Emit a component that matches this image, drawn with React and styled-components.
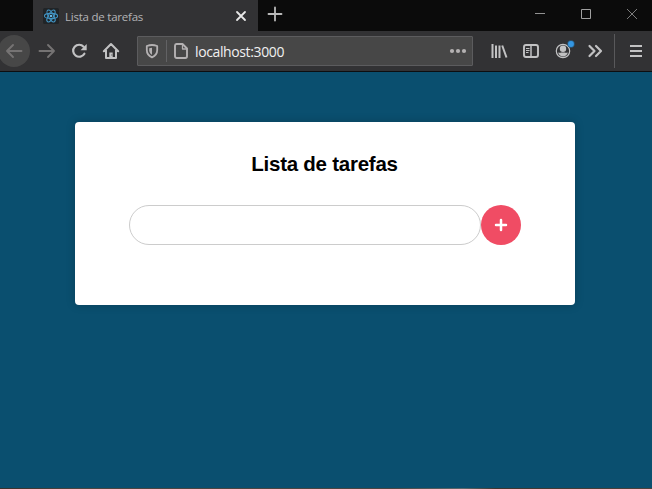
import React from "react";
import styled, { createGlobalStyle } from "styled-components";

const GlobalStyle = createGlobalStyle`
  * { box-sizing: border-box; }
  body { margin: 0; background: #0a4f6f; overflow: hidden; }
`;

const Window = styled.div`
  display: flex;
  flex-direction: column;
  width: 652px;
  height: 489px;
  overflow: hidden;
  background: #0a4f6f;
`;

const TitleBar = styled.header`
  display: flex;
  flex: none;
  height: 31px;
  padding-left: 33px;
  background: #0b0b0b;
`;

const Tab = styled.div`
  display: flex;
  align-items: center;
  width: 225px;
  padding: 0 9px 0 10px;
  background: #323234;
`;

const Favicon = styled.svg`
  width: 16px;
  height: 16px;
  margin-right: 6px;
`;

const TabTitle = styled.span`
  flex: 1;
  font: 11.5px/16px "Open Sans", "Noto Sans", sans-serif;
  letter-spacing: -0.23px;
  color: #b4b4b6;
  padding-top: 2px;
  white-space: nowrap;
`;

const TitleIcon = styled.svg`
  display: block;
  flex: none;
  width: 16px;
  height: 16px;
`;

const NewTab = styled.div`
  padding: 6px 0 0 9px;
`;

const WindowControls = styled.div`
  display: flex;
  gap: 30px;
  margin-left: auto;
  padding: 6px 12px 0 0;
`;

const Toolbar = styled.nav`
  display: flex;
  flex: none;
  align-items: center;
  height: 41px;
  padding-bottom: 1px;
  background: #323234;
  border-bottom: 1px solid #0d0e10;
`;

const ToolButton = styled.div`
  display: flex;
  flex: none;
  align-items: center;
  justify-content: center;
  width: 32px;
  height: 32px;
  border-radius: 50%;
  background: ${(p) => (p.$round ? "#474747" : "transparent")};
  color: ${(p) => (p.$dim ? "#757373" : "#c2c2c3")};
  margin-left: ${(p) => p.$before || 0}px;
`;

const ToolIcon = styled.svg`
  display: block;
  width: 20px;
  height: 20px;
  overflow: visible;
`;

const AddressBar = styled.div`
  display: flex;
  flex: none;
  align-items: center;
  width: 336px;
  height: 30px;
  margin: 1px 10px 0;
  padding: 0 4px;
  border: 1px solid #5c5c5e;
  border-radius: 1px;
  background: #474747;
  color: #b4b1b2;
`;

const AddressDivider = styled.span`
  width: 1px;
  height: 22px;
  margin: 0 4px;
  background: #626264;
`;

const Address = styled.span`
  flex: 1;
  margin-left: 4px;
  padding-top: 2px;
  font: 14px/20px "Open Sans", "Noto Sans", sans-serif;
  letter-spacing: -0.38px;
  color: #f0f0f0;
`;

const ToolbarDivider = styled.span`
  width: 1px;
  height: 34px;
  margin: 0 5px 0 3px;
  background: #59595b;
`;

const Page = styled.main`
  flex: 1;
  padding-top: 50px;
  background: #0a4f6f;
`;

const Card = styled.section`
  width: 500px;
  height: 183px;
  margin-left: 75px;
  padding: 30px 54px 0;
  border-radius: 4px;
  background: #fff;
  box-shadow: 0 0 10px rgba(0, 0, 0, 0.2);
`;

const Heading = styled.h1`
  margin: 0 1px 30px 0;
  font: bold 20.5px/23px "Liberation Sans", Arial, sans-serif;
  letter-spacing: -0.25px;
  color: #000;
  text-align: center;
`;

const TaskForm = styled.div`
  display: flex;
`;

const TaskInput = styled.input`
  width: 352px;
  height: 40px;
  padding: 0 20px;
  border: 1px solid #ccc;
  border-radius: 20px;
  outline: none;
  background: #fff;
`;

const AddButton = styled.button`
  display: flex;
  align-items: center;
  justify-content: center;
  width: 40px;
  height: 40px;
  padding: 0;
  border: 0;
  border-radius: 50%;
  background: #f04c64;
`;

const WindowEdge = styled.footer`
  flex: none;
  height: 1px;
  background: linear-gradient(90deg, #3a2f2a, #4d4541 12%, #4a4442 60%, #5b676c 71%, #40352f 76%, #4c423d);
`;

const stroke = (width = 2) => ({
  fill: "none",
  stroke: "currentColor",
  strokeWidth: width,
  strokeLinecap: "round",
  strokeLinejoin: "round",
});

function ReactLogo() {
  return (
    <Favicon viewBox="0 0 16 16">
      <rect width="16" height="16" rx="1.5" fill="#202427" />
      <g fill="none" stroke="#4295c5" strokeWidth="1.1">
        <ellipse cx="8" cy="8" rx="6.6" ry="2.6" />
        <ellipse cx="8" cy="8" rx="6.6" ry="2.6" transform="rotate(60 8 8)" />
        <ellipse cx="8" cy="8" rx="6.6" ry="2.6" transform="rotate(120 8 8)" />
      </g>
      <circle cx="8" cy="8" r="1.3" fill="#65b9e5" />
    </Favicon>
  );
}

function Tool({ children, ...rest }) {
  return (
    <ToolButton {...rest}>
      <ToolIcon viewBox="0 0 20 20">{children}</ToolIcon>
    </ToolButton>
  );
}

export default function App() {
  return (
    <>
      <GlobalStyle />
      <Window>
        <TitleBar>
          <Tab>
            <ReactLogo />
            <TabTitle>Lista de tarefas</TabTitle>
            <TitleIcon viewBox="0 0 16 16">
              <path d="M4 4l8 8M12 4l-8 8" stroke="#e8e8e8" strokeWidth="1.8" strokeLinecap="round" />
            </TitleIcon>
          </Tab>
          <NewTab>
            <TitleIcon viewBox="0 0 16 16">
              <path d="M1.5 8h13M8 1.5v13" stroke="#bababa" strokeWidth="1.8" strokeLinecap="round" />
            </TitleIcon>
          </NewTab>
          <WindowControls>
            <TitleIcon viewBox="0 0 16 16">
              <path d="M3 7.5h10" stroke="#929292" />
            </TitleIcon>
            <TitleIcon viewBox="0 0 16 16">
              <path d="M3.5 3.5h9v9h-9z" fill="none" stroke="#a0a0a0" />
            </TitleIcon>
            <TitleIcon viewBox="0 0 16 16">
              <path d="M3 3l10 10M13 3L3 13" stroke="#888" strokeWidth="0.9" />
            </TitleIcon>
          </WindowControls>
        </TitleBar>

        <Toolbar>
          <Tool $round $dim $before={-2}>
            <path d="M17.5 10H3M9 4L3 10l6 6" {...stroke(1.9)} />
          </Tool>
          <Tool $dim $before={1}>
            <path d="M2.5 10H17M11 4l6 6-6 6" {...stroke(1.9)} />
          </Tool>
          <Tool>
            <path d="M15.4 12.7a6 6 0 1 1-.8-7" {...stroke(2.2)} />
            <path d="M17.7 3v6.2h-6.2z" fill="currentColor" />
          </Tool>
          <Tool>
            <path d="M2.8 10.2L10 3l7.2 7.2M5 9v8h10V9" {...stroke(2)} />
            <path d="M8.3 16.5v-5h3.4v5z" fill="currentColor" />
            <path d="M10.3 13.500h1v1h-1z" fill="#4a4a4c" />
          </Tool>

          <AddressBar>
            <ToolIcon viewBox="0 0 20 20">
              <path d="M10 4c1.8 0 3.5.4 5.2 1v4c0 3.3-1.7 5.8-5.2 7.3C6.5 14.8 4.8 12.3 4.8 9V5C6.5 4.4 8.2 4 10 4z" {...stroke(1.8)} />
              <path d="M10 6.7C9 6.7 8 6.9 7.2 7.2v2c0 1.9.9 3.5 2.8 4.5z" fill="currentColor" />
            </ToolIcon>
            <AddressDivider />
            <ToolIcon viewBox="0 0 20 20">
              <path d="M5.5 3h6L16 7.5v7.8A1.7 1.7 0 0 1 14.3 17H5.7A1.7 1.7 0 0 1 4 15.3V4.7A1.7 1.7 0 0 1 5.5 3z" {...stroke(1.9)} />
              <path d="M11.5 3.5V8H16" {...stroke(1.3)} />
            </ToolIcon>
            <Address>localhost:3000</Address>
            <ToolIcon viewBox="0 0 20 20" fill="currentColor">
              <circle cx="4" cy="10" r="2.1" />
              <circle cx="10" cy="10" r="2.1" />
              <circle cx="16" cy="10" r="2.1" />
            </ToolIcon>
          </AddressBar>

          <Tool>
            <path d="M3.5 3v14M7 4.500V17M10.500 4.500V17M13.200 4.500l4.300 12" {...stroke(2)} strokeLinecap="butt" />
          </Tool>
          <Tool>
            <rect x="3" y="4" width="14" height="12" rx="2" {...stroke(1.9)} />
            <path d="M10 4v12" {...stroke(1.5)} />
            <path d="M5 7.500h3.500M5 9.500h3.500M5 11.500h2.500" {...stroke(1)} strokeLinecap="butt" />
          </Tool>
          <Tool>
            <circle cx="10" cy="10" r="6.7" {...stroke(1.2)} />
            <circle cx="10" cy="7.8" r="3.2" fill="currentColor" />
            <path d="M5.2 11.5c1.2.3 2.5.3 3 0h3.6c.5.3 1.8.3 3 0-.3 2.4-2.4 3.900-4.800 3.900s-4.500-1.500-4.800-3.900z" fill="currentColor" />
            <circle cx="18" cy="3" r="3.7" fill="#285a80" />
            <circle cx="18" cy="3" r="2.9" fill="#3496e2" />
          </Tool>
          <Tool>
            <path d="M4.5 5l5 5-5 5M11 5l5 5-5 5" {...stroke(2.2)} />
          </Tool>
          <ToolbarDivider />
          <Tool>
            <path d="M4 5h12M4 10h12M4 15h12" {...stroke(2)} strokeLinecap="butt" />
          </Tool>
        </Toolbar>

        <Page>
          <Card>
            <Heading>Lista de tarefas</Heading>
            <TaskForm>
              <TaskInput aria-label="Lista de tarefas" />
              <AddButton aria-label="+">
                <svg width="14" height="14" viewBox="0 0 14 14">
                  <path d="M7 2v10M2 7h10" stroke="#fff" strokeWidth="2.5" strokeLinecap="round" />
                </svg>
              </AddButton>
            </TaskForm>
          </Card>
        </Page>
        <WindowEdge />
      </Window>
    </>
  );
}
